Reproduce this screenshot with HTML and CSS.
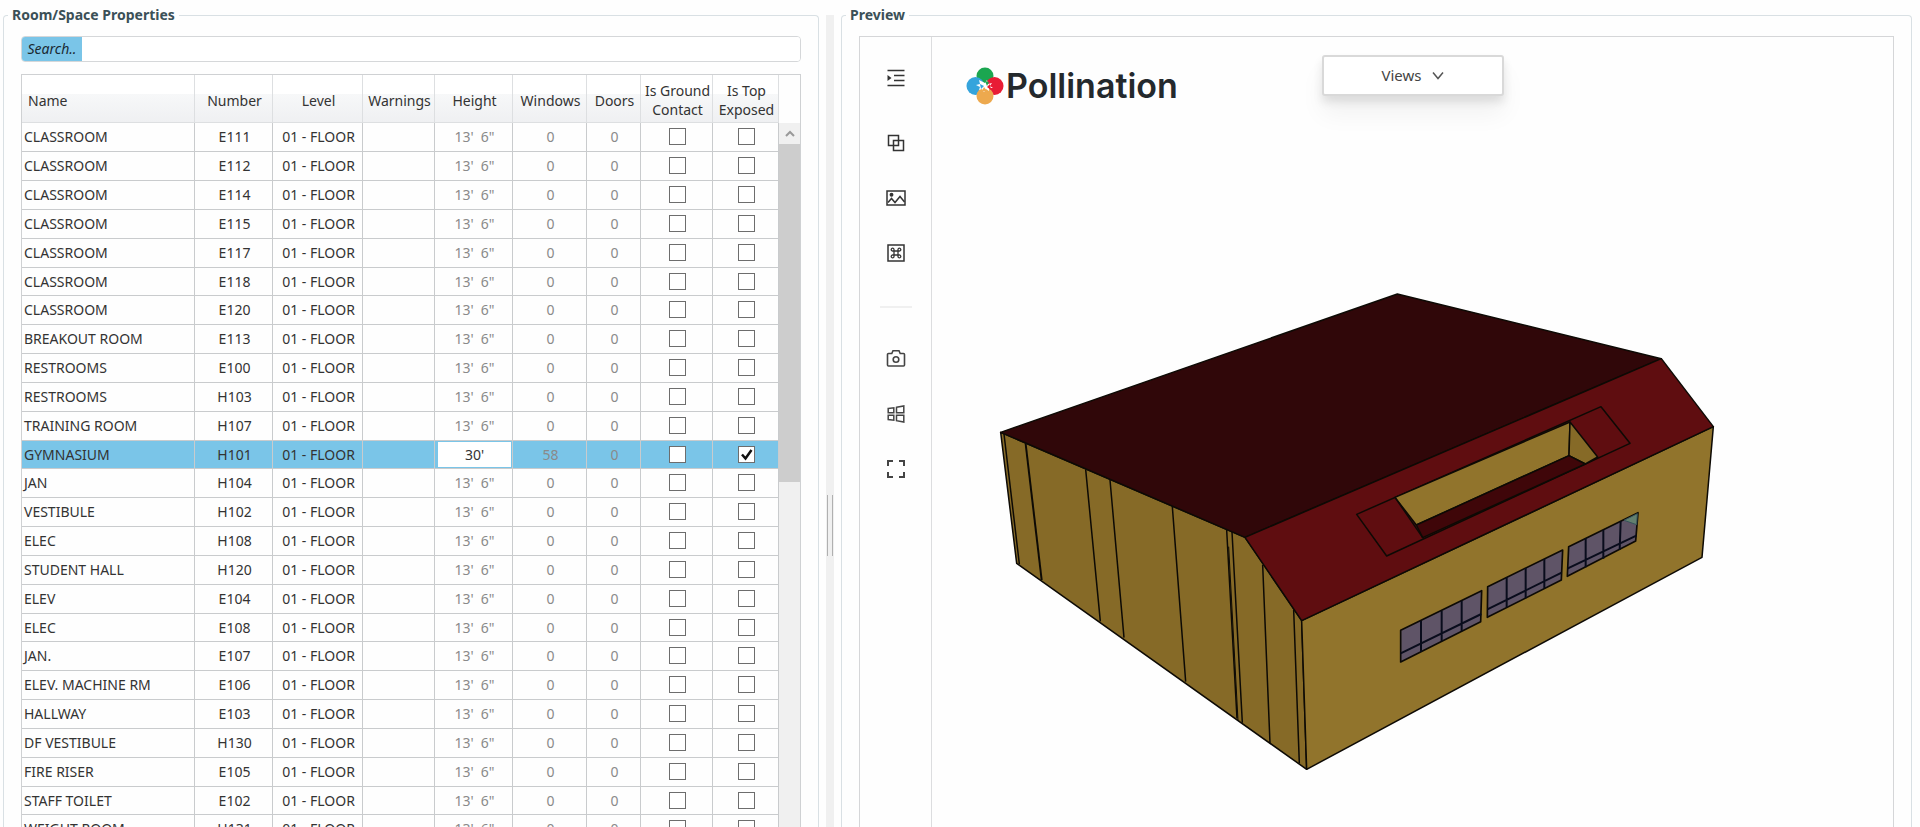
FILE: index.html
```html
<!DOCTYPE html>
<html lang="en">
<head>
<meta charset="utf-8">
<title>Room/Space Properties</title>
<link rel="stylesheet" href="styles.css">
</head>
<body>
<main class="window">
  <fieldset class="group">
    <legend>Room/Space Properties</legend>
    <div class="group-body">
      <div class="search">
        <label for="search">Search..</label>
        <input id="search" type="text">
      </div>
      <div class="grid">
        <table class="rooms">
          <colgroup>
            <col class="c-name"><col class="c-number"><col class="c-level"><col class="c-warn"><col class="c-height"><col class="c-windows"><col class="c-doors"><col class="c-ground"><col class="c-top">
          </colgroup>
          <thead>
            <tr><th class="left">Name</th><th>Number</th><th>Level</th><th>Warnings</th><th>Height</th><th>Windows</th><th>Doors</th><th>Is Ground Contact</th><th>Is Top Exposed</th></tr>
          </thead>
          <tbody id="rows"></tbody>
        </table>
        <div class="scroll">
          <button class="scroll-up" type="button" aria-label="Scroll up"><svg width="10" height="7" viewBox="0 0 10 7"><path d="M1 6l4-4 4 4" fill="none" stroke="#999" stroke-width="2"/></svg></button>
          <div class="scroll-thumb"></div>
        </div>
      </div>
    </div>
  </fieldset>

  <div class="splitter"><span class="grip"></span></div>

  <fieldset class="group">
    <legend>Preview</legend>
    <div class="group-body preview-body">
      <div class="preview">
        <nav class="tools">
          <button class="tool tool-menu" type="button" aria-label="Expand menu"><svg width="20" height="20" viewBox="0 0 20 20"><path d="M1.500 2.500h17M8 7.500h10.500M8 12.500h10.500M1.500 17.500h17" stroke="#333" stroke-width="1.500"/><path d="M1.500 7v6l4-3z" fill="#333"/></svg></button>
          <button class="tool" type="button" aria-label="Layers"><svg width="20" height="20" viewBox="0 0 20 20" fill="none" stroke="#333" stroke-width="1.500"><path d="M2.500 2.500h10v10h-10zM7.500 7.500h10v10h-10z"/></svg></button>
          <button class="tool" type="button" aria-label="Image"><svg width="20" height="20" viewBox="0 0 20 20" fill="none" stroke="#333" stroke-width="1.500"><path d="M1 3h18v14H1z"/><path d="M2 14.500l3.500-4 3.500 4 5-6 4.500 5.500"/><circle cx="5.500" cy="6.800" r="1.200" fill="#333"/></svg></button>
          <button class="tool" type="button" aria-label="Commands"><svg width="20" height="20" viewBox="0 0 20 20" fill="none" stroke="#333"><path d="M2 2h16v16H2z" stroke-width="1.500"/><path d="M8 8V6.700A1.400 1.400 0 1 0 6.700 8h6.600A1.400 1.400 0 1 0 12 6.700v6.600A1.400 1.400 0 1 0 13.300 12H6.700A1.400 1.400 0 1 0 8 13.300z" stroke-width="1.300"/></svg></button>
          <hr class="rule">
          <button class="tool" type="button" aria-label="Capture"><svg width="20" height="20" viewBox="0 0 20 20" fill="none" stroke="#444" stroke-width="1.600"><path d="M2.500 4.500h3.300l1.200-2.700h6L14.200 4.500h3.300a1 1 0 0 1 1 1v10.500a1 1 0 0 1-1 1h-15a1 1 0 0 1-1-1V5.500a1 1 0 0 1 1-1z"/><circle cx="10" cy="10.500" r="2.800"/></svg></button>
          <button class="tool" type="button" aria-label="Panes"><svg width="20" height="20" viewBox="0 0 20 20" fill="none" stroke="#444" stroke-width="1.500"><path d="M2.200 4.400l5.600-.6v5H2.200zM10.500 3.300l7.300-1.300v6.800h-7.300zM2.200 11.200h5.600v5l-5.600-.6zM10.500 11.200h7.300V18l-7.300-1.300z"/></svg></button>
          <button class="tool" type="button" aria-label="Full screen"><svg width="20" height="20" viewBox="0 0 20 20" fill="none" stroke="#444" stroke-width="2"><path d="M2 7V2h5M13 2h5v5M18 13v5h-5M7 18H2v-5"/></svg></button>
        </nav>
        <section class="viewport">
          <svg class="model" viewBox="-144 -729 2883 2370" preserveAspectRatio="xMidYMin meet" role="img" aria-label="Gymnasium model">
            <g stroke="#0d0a05" stroke-width="4.500" stroke-linejoin="round">
              <path d="M62 457L795 772 965 1022 980 1468 110 850z" fill="#866a27"/>
              <path d="M965 1022L2200 440 2166 832 980 1468z" fill="#91742c"/>
              <path d="M62 457L1252 42 2044 236 795 772z" fill="#300709"/>
              <path d="M795 772L2044 236 2200 440 965 1022z" fill="#5f0d10"/>
              <path d="M72 462L118 852M317 568L361 1024M390 600L432 1073M577 680L617 1205M740 750L771 1315M756 756L787 1328M848 855L870 1390M941 990L958 1450" fill="none"/>
              <path d="M137 492L185 900" stroke-width="6"/>
              <path d="M746 800L774 1322" stroke-width="3"/>
              <path d="M1130 703L1863 380 1950 490 1220 828z" fill="#5f0d10"/>
              <path d="M1245 652L1770 426 1767 527 1309 735z" fill="#91742c"/>
              <path d="M1770 426L1853 531 1816 552 1767 527z" fill="#866a27"/>
              <path d="M1309 735L1767 527 1816 552 1328 773z" fill="#3f0609"/>
              <path d="M1245 652L1328 773" fill="none"/>
              <g fill="#5f5467" stroke-width="5">
                <path d="M1262 1051L1505 932 1502 1025 1262 1146z"/>
                <path d="M1523 920L1748 810 1744 900 1522 1012z"/>
                <path d="M1766 800L1974 698 1967 783 1762 889z"/>
              </g>
              <path d="M1932 721L1972 701 1970 734z" fill="#63806f" stroke="#36535a" stroke-width="3"/>
              <path d="M1262 1120L1504 1002M1323 1022V1115M1385 992V1084M1445 962V1054M1522 988L1745 878M1580 892V982M1637 864V955M1693 837V925M1762 866L1969 767M1817 775V862M1870 750V836M1922 724L1919 810" fill="none" stroke="#090c1c" stroke-width="6"/>
            </g>
          </svg>
          <header class="overlay">
            <div class="brand">
              <svg width="38" height="38" viewBox="0 0 38 38">
                <circle cx="19" cy="9" r="8.500" fill="#1ba650"/><circle cx="9.500" cy="19" r="9" fill="#35a4dc"/><circle cx="28.500" cy="19" r="9" fill="#e81c35"/><circle cx="19" cy="29" r="8.500" fill="#eda94e"/>
                <path d="M19 16l2-3 1 4 4-1-2 3 3 2-4 0 0 3-3-2-2 3-2-3-3 1 1-3-4-2 4-1-1-4 4 2z" fill="#fff"/>
                <path d="M19 14l4 1-2 4z" fill="#1ba650"/><path d="M14 17l4 2-3 3z" fill="#35a4dc"/><path d="M24 17l-3 3 4 3z" fill="#e81c35"/><path d="M16 24l2-4 3 4z" fill="#eda94e"/>
              </svg>
              <span>Pollination</span>
            </div>
            <button class="views" type="button">Views <svg width="12" height="10" viewBox="0 0 12 10"><path d="M1 1.500l5 6 5-6" fill="none" stroke="#555" stroke-width="1.500"/></svg></button>
          </header>
        </section>
      </div>
    </div>
  </fieldset>
</main>
<script src="rooms.js"></script>
</body>
</html>
```
FILE: styles.css
```css
* { box-sizing: border-box; }

body {
  margin: 0;
  background: #fefefe;
  color: #333;
  font: 14px/19px "Noto Sans", "Open Sans", sans-serif;
}

button, input { font: inherit; color: inherit; }

.window {
  display: grid;
  grid-template-columns: minmax(0, 816fr) 8px minmax(0, 1071fr);
  column-gap: 7px;
  height: 100vh;
  padding: 5px 8px 0 3px;
  overflow: hidden;
}

.group {
  min-width: 0;
  min-height: 0;
  margin: 0;
  padding: 0 17px;
  border: 1px solid #d9e0e4;
  border-bottom: 0;
  border-radius: 4px 4px 0 0;
  height: 100%;
}

.group legend {
  margin-left: -13px;
  padding: 0 4px;
  color: #3b5057;
  font-weight: 700;
  line-height: 20px;
}

.group-body {
  display: flex;
  flex-direction: column;
  gap: 12px;
  height: calc(100vh - 25px);
  padding-top: 11px;
}

.search {
  display: flex;
  flex: none;
  height: 26px;
  border: 1px solid #d5d7d9;
  border-radius: 4px;
  overflow: hidden;
  background: #fff;
}

.search label {
  width: 60px;
  background: #7ac5e8;
  color: #1b2a33;
  font-style: italic;
  line-height: 24px;
  text-align: center;
}

.search input {
  flex: 1;
  border: 0;
  outline: 0;
  padding: 0 6px;
}

.grid {
  display: flex;
  flex: 1;
  min-height: 0;
  border: 1px solid #cfd1d3;
  border-bottom: 0;
  overflow: hidden;
}

.rooms {
  flex: 1;
  width: 0;
  align-self: flex-start;
  table-layout: fixed;
  border-collapse: separate;
  border-spacing: 0;
}

.c-number, .c-height { width: 78px; }
.c-level { width: 90px; }
.c-warn, .c-ground { width: 72px; }
.c-windows { width: 74px; }
.c-doors { width: 54px; }
.c-top { width: 66px; }

.rooms th, .rooms td {
  padding: 0 0 0 2px;
  border-right: 1px solid #c9cbcd;
  border-bottom: 1px solid #c9cbcd;
  text-align: center;
  white-space: nowrap;
}

.rooms th {
  height: 48px;
  padding-top: 3px;
  border-color: #dddfe1;
  background: linear-gradient(#fff 0 40%, #f7f8f9 40%, #eff0f2 100%);
  font-weight: 400;
  white-space: normal;
}

.rooms th.left { padding-left: 6px; text-align: left; }

.rooms td { height: 29px; padding-bottom: 1px; }
.rooms tr:nth-child(6n) td { height: 28px; }
.rooms td.left { text-align: left; }
.rooms .dim { color: #8a8a8a; white-space: pre; }
.rooms .selected td { background: #7ac5e8; }

.rooms td input { display: block; margin: 0 auto; }

.check {
  appearance: none;
  width: 17px;
  height: 17px;
  border: 1px solid #6d6d6d;
  background: #fff;
}

.check:checked {
  background: #fff url("data:image/svg+xml,%3Csvg xmlns='http://www.w3.org/2000/svg' viewBox='0 0 15 15'%3E%3Cpath d='M3 7.500l3.500 4L12.500 3' fill='none' stroke='%23111' stroke-width='2.500'/%3E%3C/svg%3E");
}

.edit {
  width: calc(100% - 2px);
  height: 25px;
  padding: 0;
  border: 0;
  outline: 0;
  background: #fff;
  text-align: center;
}

.scroll {
  display: flex;
  flex-direction: column;
  width: 21px;
  margin-top: 48px;
  background: #f0f0f0;
}

.scroll-up {
  height: 21px;
  padding: 0;
  border: 0;
  background: #f0f0f0;
  line-height: 0;
}

.scroll-thumb { height: 48%; background: #cdcdcd; }

.splitter {
  display: flex;
  align-items: center;
  justify-content: center;
  margin-top: 10px;
  background: #f0f0f0;
}

.grip {
  width: 6px;
  height: 61px;
  margin-top: 208px;
  border: solid #b0b0b0;
  border-width: 0 1px;
}

.preview {
  display: flex;
  flex: 1;
  min-height: 0;
  border: 1px solid #d5d6d8;
  border-bottom: 0;
}

.tools {
  display: flex;
  flex: none;
  flex-direction: column;
  align-items: center;
  gap: 31px;
  width: 72px;
  padding-top: 29px;
  border-right: 1px solid #dcdddf;
}

.tool {
  display: grid;
  place-items: center;
  width: 24px;
  height: 24px;
  padding: 0;
  border: 0;
  background: none;
}

.tool-menu { margin-bottom: 10px; }

.rule {
  width: 32px;
  height: 2px;
  margin: 10px 0 8px;
  border: 0;
  background: #f0f0f0;
}

.viewport {
  position: relative;
  flex: 1;
  min-width: 0;
  overflow: hidden;
}

.model {
  position: absolute;
  top: 0;
  left: 0;
  width: 100%;
}

.overlay {
  position: relative;
  display: grid;
  grid-template-columns: 1fr auto 1fr;
  align-items: start;
  padding-top: 18px;
}

.brand {
  display: flex;
  align-items: center;
  gap: 2px;
  padding: 12px 0 0 34px;
  color: #24292d;
  font: 600 34px/38px Inter, sans-serif;
}

.views {
  display: flex;
  align-items: center;
  justify-content: center;
  gap: 10px;
  width: 182px;
  height: 41px;
  border: 2px solid #d9d9d9;
  border-radius: 3px;
  background: #fff;
  box-shadow: 0 6px 10px #0000001a, 0 18px 24px #0000000d;
  color: #444;
  font-size: 15px;
}
```
FILE: rooms.js
```javascript
const rooms = [
  ["CLASSROOM", "E111"], ["CLASSROOM", "E112"], ["CLASSROOM", "E114"],
  ["CLASSROOM", "E115"], ["CLASSROOM", "E117"], ["CLASSROOM", "E118"],
  ["CLASSROOM", "E120"], ["BREAKOUT ROOM", "E113"], ["RESTROOMS", "E100"],
  ["RESTROOMS", "H103"], ["TRAINING ROOM", "H107"], ["GYMNASIUM", "H101"],
  ["JAN", "H104"], ["VESTIBULE", "H102"], ["ELEC", "H108"],
  ["STUDENT HALL", "H120"], ["ELEV", "E104"], ["ELEC", "E108"],
  ["JAN.", "E107"], ["ELEV. MACHINE RM", "E106"], ["HALLWAY", "E103"],
  ["DF VESTIBULE", "H130"], ["FIRE RISER", "E105"], ["STAFF TOILET", "E102"],
  ["WEIGHT ROOM", "H131"]
];

document.getElementById("rows").innerHTML = rooms.map(([name, number]) => {
  const active = number === "H101";
  const height = active
    ? `<td><input class="edit" type="text" aria-label="Height of ${number}" value="30'"></td>`
    : `<td class="dim">13'  6"</td>`;
  return `<tr${active ? ' class="selected"' : ""}>
    <td class="left">${name}</td><td>${number}</td><td>01 - FLOOR</td><td></td>${height}
    <td class="dim">${active ? 58 : 0}</td><td class="dim">0</td>
    <td><input class="check" type="checkbox" aria-label="${number} is ground contact"></td>
    <td><input class="check" type="checkbox" aria-label="${number} is top exposed"${active ? " checked" : ""}></td>
  </tr>`;
}).join("");
```
